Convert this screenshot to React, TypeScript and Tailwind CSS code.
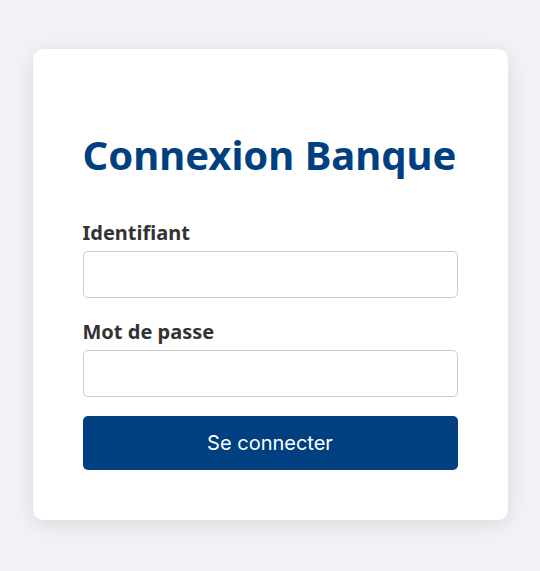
import React from 'react';

export default function App() {
  return (
    <div className="min-h-[571px] bg-[#f0f2f5] flex justify-center pt-[49px] font-['Noto_Sans',sans-serif]">
      <div className="w-[475px] h-[471px] bg-white rounded-[10px] shadow-[0_4px_20px_rgba(0,0,0,0.1)] px-[50px] pt-[79px] pb-[50px]">
        <h1 className="text-[40px] leading-[54px] font-bold text-[#004080] whitespace-nowrap mb-[37px]">
          Connexion Banque
        </h1>

        <form onSubmit={(e) => e.preventDefault()}>
          <div className="mb-[20px]">
            <label className="block text-[20px] leading-[27px] font-bold text-[#333] mb-[5px]">Identifiant</label>
            <input
              type="text"
              className="block w-full h-[47px] border border-[#ccc] rounded-[5px] px-3 outline-none"
            />
          </div>

          <div className="mb-[19px]">
            <label className="block text-[20px] leading-[27px] font-bold text-[#333] mb-[5px]">Mot de passe</label>
            <input
              type="password"
              className="block w-full h-[47px] border border-[#ccc] rounded-[5px] px-3 outline-none"
            />
          </div>

          <button
            type="submit"
            className="w-full h-[54px] bg-[#004080] text-white rounded-[5px] text-[20px] font-['Inter',sans-serif]"
          >
            Se connecter
          </button>
        </form>
      </div>
    </div>
  );
}
